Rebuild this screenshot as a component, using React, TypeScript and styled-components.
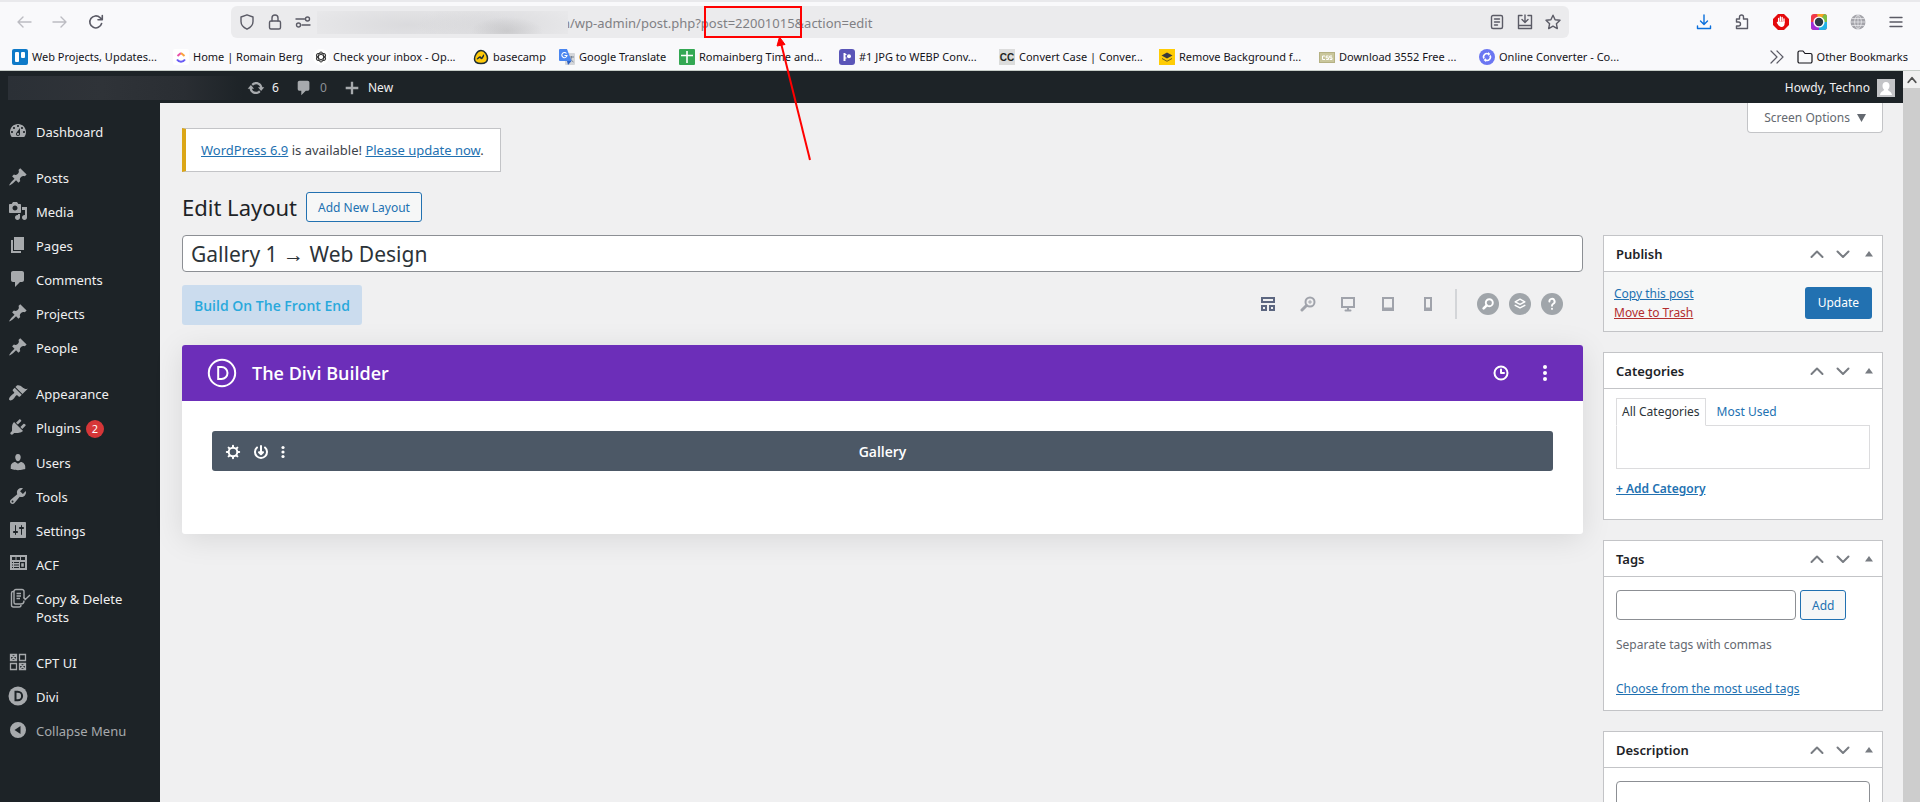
import React from "react";
import styled, { createGlobalStyle } from "styled-components";

const GlobalStyle = createGlobalStyle`
  *, *::before, *::after { box-sizing: border-box; }
  html, body { margin: 0; padding: 0; }
  body {
    font-family: "Noto Sans", "Open Sans", sans-serif;
    font-size: 12px;
    line-height: 18px;
    color: #3c434a;
    background: #f0f0f1;
    overflow: hidden;
  }
  button, input, textarea { font: inherit; color: inherit; margin: 0; }
  button { padding: 0; border: 0; background: none; cursor: pointer; }
  ul { list-style: none; margin: 0; padding: 0; }
  h1, h2, p { margin: 0; font-weight: 400; }
  a { color: #2271b1; }
  svg { display: block; flex: none; }
`;

/* ---------- shared ---------- */

const Window = styled.div`
  position: relative;
  display: flex;
  flex-direction: column;
  height: 100vh;
  overflow: hidden;
`;

const IconButton = styled.button<{ $size?: number; $color?: string }>`
  display: flex;
  align-items: center;
  justify-content: center;
  flex: none;
  width: ${(p) => p.$size ?? 28}px;
  height: ${(p) => p.$size ?? 28}px;
  color: ${(p) => p.$color ?? "#5b5b66"};
`;

const OutlineButton = styled.button`
  height: 30px;
  padding: 1px 11px 0;
  border: 1px solid #2271b1;
  border-radius: 3px;
  background: #f6f7f7;
  color: #2271b1;
`;

/* ---------- browser chrome ---------- */

const Chrome = styled.header`
  flex: none;
  background: #f9f9fb;
  border-top: 2px solid #e9e9ec;
  border-bottom: 1px solid #c6cdc8;
`;

const NavBar = styled.div`
  display: flex;
  align-items: center;
  height: 40px;
  padding: 0 10px 0 10px;
`;

const NavButtons = styled.div`
  display: flex;
  gap: 8px;
  width: 221px;
`;

const AddressBar = styled.div`
  flex: 1;
  min-width: 0;
  display: flex;
  align-items: center;
  height: 32px;
  padding: 0 2px;
  border-radius: 6px;
  background: #ebebed;
`;

/* Opaque patch that hides the host name, overlapping its last letter. */
const Redacted = styled.span`
  position: relative;
  z-index: 1;
  flex: none;
  width: 251px;
  height: 23px;
  margin-right: -6px;
  background:
    radial-gradient(ellipse 36px 14px at 190px 20px, rgba(190, 190, 192, 0.6), rgba(190, 190, 192, 0)),
    radial-gradient(ellipse 80px 24px at 180px 14px, rgba(205, 205, 208, 0.5), rgba(205, 205, 208, 0)),
    radial-gradient(ellipse 110px 24px at 90px 14px, rgba(205, 205, 208, 0.5), rgba(205, 205, 208, 0)),
    #e8e8ea;
`;

const UrlField = styled.input`
  flex: 1;
  min-width: 0;
  padding: 2px 0 0;
  border: 0;
  outline: 0;
  background: transparent;
  font-size: 13px;
  color: #808084;
`;

const Extensions = styled.div`
  display: flex;
  justify-content: space-between;
  width: 220px;
  margin-left: 121px;
`;

const Bookmarks = styled.nav`
  display: flex;
  align-items: center;
  gap: 12px;
  height: 28px;
  padding: 1px 12px 0;
`;

const Bookmark = styled.a<{ $width?: number }>`
  display: flex;
  align-items: center;
  gap: 4px;
  width: ${(p) => (p.$width ? `${p.$width}px` : "auto")};
  flex: none;
  font-size: 11px;
  white-space: nowrap;
  color: #15141a;
  text-decoration: none;
`;

const BookmarkEnd = styled.div`
  display: flex;
  align-items: center;
  gap: 12px;
  margin-left: auto;
`;

/* ---------- admin bar ---------- */

const Viewport = styled.div`
  flex: 1;
  min-height: 0;
  display: flex;
`;

const Page = styled.div`
  flex: 1;
  min-width: 0;
  display: flex;
  flex-direction: column;
`;

const AdminBar = styled.div`
  flex: none;
  display: flex;
  align-items: center;
  height: 32px;
  padding: 1px 8px 0;
  background: #1d2327;
  color: #f0f0f1;
`;

const SiteName = styled.span`
  width: 235px;
  height: 24px;
  background: linear-gradient(90deg, #2b3036, #2f3338 40%, #2a2e33 75%, #1d2327);
`;

const AdminItem = styled.a<{ $muted?: boolean; $width?: number }>`
  display: flex;
  align-items: center;
  gap: 7px;
  width: ${(p) => (p.$width ? `${p.$width}px` : "auto")};
  color: ${(p) => (p.$muted ? "#8c9196" : "#f0f0f1")};
  text-decoration: none;
  svg { color: #a7aaad; }
`;

const AdminItems = styled.div`
  display: flex;
  padding-left: 4px;
`;

const Account = styled(AdminItem)`
  margin-left: auto;
`;

const Body = styled.div`
  flex: 1;
  min-height: 0;
  display: flex;
`;

/* ---------- side menu ---------- */

const SideMenu = styled.nav`
  flex: none;
  width: 160px;
  padding-top: 12px;
  background: #1d2327;
`;

const MenuItem = styled.li<{ $spaced?: boolean }>`
  margin-top: ${(p) => (p.$spaced ? 12 : 0)}px;
`;

const MenuLink = styled.a<{ $muted?: boolean }>`
  display: flex;
  gap: 8px;
  width: 100%;
  padding: 8px 16px 8px 8px;
  font-size: 13px;
  line-height: 18px;
  text-decoration: none;
  color: ${(p) => (p.$muted ? "#a7aaad" : "#f0f0f1")};
  svg { color: #a7aaad; margin-top: -2px; }
`;

const Count = styled.span`
  display: inline-block;
  min-width: 18px;
  margin-left: 5px;
  border-radius: 9px;
  background: #d63638;
  color: #fff;
  font-size: 11px;
  text-align: center;
`;

/* ---------- main content ---------- */

const Content = styled.main`
  flex: 1;
  min-width: 0;
  padding: 0 20px 0 22px;
`;

const TopRow = styled.div`
  display: flex;
  justify-content: space-between;
  align-items: flex-start;
  margin-bottom: 20px;
`;

const Notice = styled.p`
  margin-top: 25px;
  padding: 12px 16px 12px 15px;
  border: 1px solid #c3c4c7;
  border-left: 4px solid #dba617;
  background: #fff;
  font-size: 13px;
`;

const ScreenOptions = styled.button`
  height: 30px;
  padding: 1px 16px 0;
  border: 1px solid #c3c4c7;
  border-top: 0;
  border-radius: 0 0 4px 4px;
  background: #fff;
  color: #646970;
  display: flex;
  align-items: center;
  gap: 7px;
`;

const Heading = styled.div`
  display: flex;
  align-items: center;
  gap: 9px;
  margin-bottom: 13px;
`;

const Title = styled.h1`
  font-size: 22px;
  line-height: 28px;
  color: #1d2327;
`;

const Columns = styled.div`
  display: grid;
  grid-template-columns: minmax(0, 1fr) 280px;
  gap: 20px;
  align-items: start;
`;

const TitleInput = styled.input`
  display: block;
  width: 100%;
  height: 37px;
  padding: 0 8px;
  border: 1px solid #8c8f94;
  border-radius: 4px;
  background: #fff;
  font-size: 21px;
  color: #2c3338;
`;

const BuilderBar = styled.div`
  display: flex;
  align-items: center;
  justify-content: space-between;
  margin: 13px 0 20px;
`;

const BuildButton = styled.button`
  height: 40px;
  padding: 1px 12px 0;
  border-radius: 3px;
  background: #cbdcee;
  color: #29a9dc;
  font-family: "Open Sans", "Noto Sans", sans-serif;
  font-size: 14px;
  font-weight: 600;
`;

const ViewTools = styled.div`
  display: flex;
  align-items: center;
  height: 40px;
  padding: 0 20px 2px 0;
`;

const Divider = styled.span`
  width: 2px;
  height: 30px;
  margin: 0 20px 0 7px;
  background: #d3d5d8;
`;

const RoundTools = styled.div`
  display: flex;
  gap: 10px;
`;

const RoundButton = styled(IconButton)`
  border-radius: 50%;
  background: #a0a5aa;
  color: #fff;
`;

const Builder = styled.section`
  border-radius: 3px;
  background: #fff;
  box-shadow: 0 5px 30px rgba(0, 0, 0, 0.1);
  font-family: "Open Sans", "Noto Sans", sans-serif;
`;

const BuilderHead = styled.div`
  display: flex;
  align-items: center;
  height: 56px;
  padding: 0 24px;
  border-radius: 3px 3px 0 0;
  background: #6c2eb9;
  color: #fff;
`;

const BuilderTitle = styled.h2`
  flex: 1;
  margin-left: 14px;
  font-size: 18px;
  line-height: 24px;
  font-weight: 600;
`;

const BuilderActions = styled.div`
  display: flex;
  gap: 16px;
`;

const BuilderBody = styled.div`
  padding: 30px 30px 63px;
`;

const ModuleRow = styled.div`
  display: grid;
  grid-template-columns: 1fr auto 1fr;
  align-items: center;
  height: 40px;
  padding: 1px 7px 0;
  border-radius: 3px;
  background: #4c5866;
  color: #fff;
  font-size: 14px;
  font-weight: 600;
`;

const ModuleTools = styled.div`
  display: flex;
  align-items: center;
`;

/* ---------- meta boxes ---------- */

const Sidebar = styled.aside`
  display: flex;
  flex-direction: column;
  gap: 20px;
`;

const Box = styled.section`
  border: 1px solid #c3c4c7;
  background: #fff;
`;

const BoxHead = styled.div`
  display: flex;
  align-items: center;
  height: 36px;
  padding: 0 0 0 12px;
  border-bottom: 1px solid #c3c4c7;
`;

const BoxTitle = styled.h2`
  flex: 1;
  font-size: 13px;
  font-weight: 600;
  color: #1d2327;
`;

const PublishBody = styled.div`
  display: flex;
  justify-content: space-between;
  align-items: center;
  height: 59px;
  padding: 3px 10px 0;
  background: #f6f7f7;
`;

const PublishLinks = styled.div`
  display: flex;
  flex-direction: column;
  gap: 1px;
`;

const DangerLink = styled.a`
  color: #b32d2e;
`;

const PrimaryButton = styled.button`
  height: 32px;
  padding: 0 13px;
  border-radius: 3px;
  background: #2271b1;
  color: #fff;
`;

const BoxBody = styled.div<{ $top: number; $bottom: number }>`
  padding: ${(p) => p.$top}px 12px ${(p) => p.$bottom}px;
`;

const Tabs = styled.div`
  display: flex;
`;

const Tab = styled.button<{ $active?: boolean }>`
  height: 28px;
  padding: 0 5px;
  margin-right: 5px;
  margin-bottom: -1px;
  border: 1px solid ${(p) => (p.$active ? "#dcdcde" : "transparent")};
  border-bottom-color: ${(p) => (p.$active ? "#fff" : "transparent")};
  background: ${(p) => (p.$active ? "#fff" : "transparent")};
  color: ${(p) => (p.$active ? "#2c3338" : "#2271b1")};
  z-index: 1;
`;

const TabPanel = styled.div`
  height: 44px;
  margin-bottom: 11px;
  border: 1px solid #dcdcde;
`;

const StrongLink = styled.a`
  font-weight: 600;
`;

const TagRow = styled.div`
  display: flex;
  gap: 4px;
`;

const TagInput = styled.input`
  width: 180px;
  height: 30px;
  border: 1px solid #8c8f94;
  border-radius: 4px;
  background: #fff;
`;

const Hint = styled.p`
  margin: 16px 0 26px;
  color: #646970;
`;

const Description = styled.textarea`
  display: block;
  width: 100%;
  height: 80px;
  border: 1px solid #8c8f94;
  border-radius: 4px;
  background: #fff;
  resize: none;
`;

/* ---------- scroll track and annotation ---------- */

const ScrollTrack = styled.div`
  flex: none;
  width: 17px;
  background: #cdcdcd;
`;

const ScrollUp = styled.div`
  display: flex;
  align-items: center;
  justify-content: center;
  height: 17px;
  background: #f0f0f0;
  color: #505050;
`;

const Annotation = styled.svg`
  position: absolute;
  left: 703px;
  top: 5px;
  pointer-events: none;
`;

/* ---------- icons ---------- */

const Dash = ({ d, size = 20 }: { d: string; size?: number }) => (
  <svg width={size} height={size} viewBox="0 0 20 20" fill="currentColor" fillRule="evenodd" aria-hidden>
    <path d={d} />
  </svg>
);

const Line = ({
  children,
  size = 16,
  w = 1.4,
}: {
  children: React.ReactNode;
  size?: number;
  w?: number;
}) => (
  <svg
    width={size}
    height={size}
    viewBox="0 0 16 16"
    fill="none"
    stroke="currentColor"
    strokeWidth={w}
    strokeLinecap="round"
    strokeLinejoin="round"
    aria-hidden
  >
    {children}
  </svg>
);

const PIN =
  "M10.44 3.02l1.82-1.82 6.36 6.35-1.83 1.82c-1.05-.68-2.48-.57-3.41.36l-.75.75c-.92.93-1.04 2.35-.35 3.41l-1.83 1.82-2.41-2.41-2.8 2.79c-.42.42-3.38 2.71-3.8 2.29s1.86-3.39 2.28-3.81l2.79-2.79L4.1 9.36l1.83-1.82c1.05.69 2.48.57 3.4-.36l.75-.75c.93-.92 1.05-2.35.36-3.41z";
const COMMENT =
  "M5 2h9c1.1 0 2 .9 2 2v7c0 1.1-.9 2-2 2h-2l-5 5v-5H5c-1.1 0-2-.9-2-2V4c0-1.1.9-2 2-2z";
const UPDATE =
  "M10.2 3.28c3.53 0 6.43 2.61 6.92 6h2.08l-3.5 4-3.5-4h2.32c-.45-1.97-2.21-3.45-4.32-3.45-1.45 0-2.73.71-3.54 1.78L4.95 5.66C6.23 4.2 8.11 3.28 10.2 3.28zm-.4 13.44c-3.52 0-6.43-2.61-6.92-6H.8l3.5-4c1.17 1.33 2.33 2.67 3.5 4H5.48c.45 1.97 2.21 3.45 4.32 3.45 1.45 0 2.73-.71 3.54-1.78l1.71 1.95c-1.28 1.46-3.15 2.38-5.25 2.38z";
const DASHBOARD =
  "M3.76 16h12.48c1.1-1.37 1.76-3.11 1.76-5 0-4.42-3.58-8-8-8s-8 3.58-8 8c0 1.89.66 3.63 1.76 5zM10 4c.55 0 1 .45 1 1s-.45 1-1 1-1-.45-1-1 .45-1 1-1zM6 6c.55 0 1 .45 1 1s-.45 1-1 1-1-.45-1-1 .45-1 1-1zm8 0c.55 0 1 .45 1 1s-.45 1-1 1-1-.45-1-1 .45-1 1-1zm-5.37 5.55L12 7v6c0 1.1-.9 2-2 2s-2-.9-2-2c0-.57.24-1.08.63-1.45zM4 10c.55 0 1 .45 1 1s-.45 1-1 1-1-.45-1-1 .45-1 1-1zm12 0c.55 0 1 .45 1 1s-.45 1-1 1-1-.45-1-1 .45-1 1-1zm-5 3c0-.55-.45-1-1-1s-1 .45-1 1 .45 1 1 1 1-.45 1-1z";
const MEDIA =
  "M13 11V4c0-.55-.45-1-1-1h-1.67L9 1H5L3.67 3H2c-.55 0-1 .45-1 1v7c0 .55.45 1 1 1h10c.55 0 1-.45 1-1zM7 4.5c1.38 0 2.5 1.12 2.5 2.5S8.38 9.5 7 9.5 4.5 8.38 4.5 7 5.62 4.5 7 4.5zM14 6h5v10.5c0 1.38-1.12 2.5-2.5 2.5S14 17.88 14 16.5s1.12-2.5 2.5-2.5c.17 0 .34.02.5.05V9h-3V6zm-4 8.05V13h2v3.5c0 1.38-1.12 2.5-2.5 2.5S7 17.88 7 16.5 8.12 14 9.5 14c.17 0 .34.02.5.05z";
const PAGES = "M6 15V2h10v13H6zm-1 1h8v2H3V5h2v11z";
const APPEARANCE =
  "M14.48 11.06L7.41 3.99l1.5-1.5c.5-.56 2.3-.47 3.51.32 1.21.8 1.43 1.28 2.91 2.1 1.18.64 2.45 1.26 4.45.85zm-.71.71L6.7 4.7 4.93 6.47c-.39.39-.39 1.02 0 1.41l1.06 1.06c.39.39.39 1.03 0 1.42-.6.6-1.43 1.11-2.21 1.69-.35.26-.7.53-1.01.84C1.43 14.23.4 16.08 1.4 17.07c.99 1 2.84-.03 4.18-1.36.31-.31.58-.66.85-1.02.57-.78 1.08-1.61 1.69-2.21.39-.39 1.02-.39 1.41 0l1.06 1.06c.39.39 1.02.39 1.41 0z";
const PLUGINS =
  "M13.11 4.36L9.87 7.6 8 5.73l3.24-3.24c.35-.34 1.05-.2 1.56.32.52.51.66 1.21.31 1.55zm-8 1.77l.91-1.12 9.01 9.01-1.19.84c-.71.71-2.63 1.16-3.82 1.16H6.14L4.9 17.26c-.59.59-1.54.59-2.12 0-.59-.58-.59-1.53 0-2.12l1.24-1.24v-3.88c0-1.13.4-3.19 1.09-3.89zm7.26 3.97l3.24-3.24c.34-.35 1.04-.21 1.55.31.52.51.66 1.21.31 1.55l-3.24 3.25z";
const USERS =
  "M10 9.25c-2.27 0-2.73-3.44-2.73-3.44C7 4.02 7.82 2 9.97 2c2.16 0 2.98 2.02 2.71 3.81 0 0-.41 3.44-2.68 3.44zm0 2.57L12.72 10c2.39 0 4.52 2.33 4.52 4.53v2.49s-3.65 1.13-7.24 1.13c-3.65 0-7.24-1.13-7.24-1.13v-2.49c0-2.25 1.94-4.48 4.47-4.48z";
const TOOLS =
  "M16.68 9.77c-1.34 1.34-3.3 1.67-4.95.99l-5.41 6.52c-.99.99-2.59.99-3.58 0s-.99-2.59 0-3.57l6.52-5.42c-.68-1.65-.35-3.61.99-4.95 1.28-1.28 3.12-1.62 4.72-1.06l-2.89 2.89 2.82 2.82 2.86-2.87c.53 1.58.18 3.39-1.08 4.65zM3.81 16.21c.4.39 1.04.39 1.43 0 .4-.4.4-1.04 0-1.43-.39-.4-1.03-.4-1.43 0-.39.39-.39 1.03 0 1.43z";
const SETTINGS =
  "M18 17V3c0-.55-.45-1-1-1H3c-.55 0-1 .45-1 1v14c0 .55.45 1 1 1h14c.55 0 1-.45 1-1zM8 11h1c.55 0 1 .45 1 1s-.45 1-1 1H8v1.5c0 .28-.22.5-.5.5s-.5-.22-.5-.5V13H6c-.55 0-1-.45-1-1s.45-1 1-1h1V5.5c0-.28.22-.5.5-.5s.5.22.5.5V11zm5-2h-1c-.55 0-1-.45-1-1s.45-1 1-1h1V5.5c0-.28.22-.5.5-.5s.5.22.5.5V7h1c.55 0 1 .45 1 1s-.45 1-1 1h-1v5.5c0 .28-.22.5-.5.5s-.5-.22-.5-.5V9z";
const ACF =
  "M2 1h17v15H2zM4 3v3h3.500V3zM8.500 3v3H12V3zM13 3v3h4V3zM4 8v1h1V8zm2 0v1h5V8zM4 10.500v1h1v-1zm2 0v1h5v-1zM4 13v1h1v-1zm2 0v1h5v-1zM12 8v6h5V8zm1.200 1.200h2.600v3.600h-2.600z";
const COLLAPSE = "M10 2a8 8 0 1 1 0 16 8 8 0 0 1 0-16zM12.500 6v8L6.500 10z";

const CopyIcon = () => (
  <svg width="20" height="20" viewBox="0 0 20 20" fill="none" stroke="currentColor" strokeWidth="1.400" overflow="visible" aria-hidden>
    <path d="M16 10V3.500a2 2 0 0 0-2-2H8a2 2 0 0 0-2 2v11a1.500 1.500 0 0 0 1.500 1.500H13a3 3 0 0 0 3-3v-.5" />
    <path d="M6 3.500H5a1.500 1.500 0 0 0-1.500 1.500v12A2 2 0 0 0 5.500 19H11a2 2 0 0 0 2-2M8.500 5.500H13M8.500 8H13M8.500 10.500H12M15.500 9.500l1.800 2L22 7" />
  </svg>
);

const CptIcon = () => (
  <svg width="20" height="20" viewBox="0 0 20 20" fill="none" stroke="currentColor" strokeWidth="1.300" aria-hidden>
    <path d="M2.500 2.500h6v6h-6zM11.500 2.500h6v6h-6zM2.500 11.500h6v6h-6zM11.500 11.500h6v6h-6zM3 3l5 5M8 3L3 8M12 12l5 5M17 12l-5 5" />
  </svg>
);

const DiviIcon = () => (
  <svg width="20" height="20" viewBox="0 0 20 20" aria-hidden>
    <circle cx="10" cy="10" r="9.500" fill="currentColor" />
    <path d="M7.500 5.700h2.300a4.300 4.300 0 0 1 0 8.600H7.500z" fill="none" stroke="#1d2327" strokeWidth="2" />
  </svg>
);

const DiviMark = () => (
  <svg width="32" height="32" viewBox="0 0 32 32" fill="none" stroke="#fff" strokeWidth="2" aria-hidden>
    <circle cx="16" cy="16" r="13.200" />
    <path d="M12.200 10h3.300a6 6 0 0 1 0 12h-3.300z" />
  </svg>
);

const Dots = ({ r, gap }: { r: number; gap: number }) => (
  <svg width="6" height="20" viewBox="0 0 6 20" fill="currentColor" aria-hidden>
    <circle cx="3" cy={10 - gap} r={r} />
    <circle cx="3" cy="10" r={r} />
    <circle cx="3" cy={10 + gap} r={r} />
  </svg>
);

const Favicon = ({ name }: { name: string }) => (
  <svg width="16" height="16" viewBox="0 0 16 16" aria-hidden>
    {name === "trello" && (
      <>
        <rect width="16" height="16" rx="2" fill="#0f7ac8" />
        <rect x="3" y="3" width="4" height="10" rx="1" fill="#fff" />
        <rect x="9" y="3" width="4" height="6" rx="1" fill="#fff" />
      </>
    )}
    {name === "clickup" && (
      <>
        <rect width="16" height="16" rx="2" fill="#fff" />
        <path d="M4.500 7L8 4" fill="none" stroke="#e84fa8" strokeWidth="2" />
        <path d="M8 4l3.500 3" fill="none" stroke="#fba23c" strokeWidth="2" />
        <path d="M4 10.500c2 3 6 3 8 0" fill="none" stroke="#6a5cf5" strokeWidth="2" />
      </>
    )}
    {name === "openai" && (
      <>
        <circle cx="8" cy="8" r="8" fill="#fff" />
        <g fill="none" stroke="#333" strokeWidth="1">
          <ellipse cx="8" cy="8" rx="2.500" ry="5" />
          <ellipse cx="8" cy="8" rx="2.500" ry="5" transform="rotate(60 8 8)" />
          <ellipse cx="8" cy="8" rx="2.500" ry="5" transform="rotate(120 8 8)" />
        </g>
      </>
    )}
    {name === "basecamp" && (
      <>
        <path
          d="M8 1.500c4 0 6.500 4.500 6.500 8 0 3.500-3 5-6.500 5s-6.500-1.500-6.500-4.500S4 1.500 8 1.500z"
          fill="#ffca0a"
          stroke="#1d2d35"
          strokeWidth="1.500"
        />
        <path d="M4 9.500c1 .8 2-1.500 3-1.500s.6 1.500 1.500 1.500S10.500 6 11 6" fill="none" stroke="#1d2d35" strokeWidth="1.500" />
      </>
    )}
    {name === "translate" && (
      <>
        <rect x="6" y="4" width="10" height="12" rx="1" fill="#d4d6da" />
        <path d="M10 8h5M12.500 7v1c0 2-1.500 4-3 5M11 9.500c.8 1.500 2 2.500 3.500 3.500" stroke="#7a8594" fill="none" />
        <path d="M1 0h7l4.500 12H1a1 1 0 0 1-1-1V1a1 1 0 0 1 1-1z" fill="#4a86f0" />
        <path d="M12.500 12L9 16l-1-4z" fill="#2a5fc4" />
        <path d="M7.500 4.500A2.600 2.600 0 1 0 8 6.500H5.500" fill="none" stroke="#fff" strokeWidth="1.100" />
      </>
    )}
    {name === "sheets" && (
      <>
        <rect width="16" height="16" rx="1" fill="#34a853" />
        <path d="M2 6.500h12M8 2v12" stroke="#fff" strokeWidth="1.600" />
      </>
    )}
    {name === "webp" && (
      <>
        <rect width="16" height="16" rx="3" fill="#5a55b8" />
        <path d="M5.500 4v8" stroke="#fff" strokeWidth="2" />
        <path d="M6 5.500h1.500M6 9h1.500" stroke="#fff" strokeWidth="1" />
        <circle cx="10" cy="7.200" r="2" fill="#fff" />
      </>
    )}
    {name === "case" && (
      <>
        <rect width="16" height="16" fill="#dcdcdc" />
        <text x="8" y="12" textAnchor="middle" fontFamily="Liberation Sans, sans-serif" fontSize="10" fontWeight="700" fill="#222">
          CC
        </text>
      </>
    )}
    {name === "remove" && (
      <>
        <rect width="16" height="16" fill="#ffcc05" />
        <path d="M8 3.500l5.500 3L8 9.500l-5.500-3z" fill="#3b3b3b" />
        <path d="M3 9l5 2.800L13 9v1L8 12.800 3 10z" fill="#6b5b20" />
      </>
    )}
    {name === "download" && (
      <>
        <rect y="3" width="16" height="11" fill="#b5b183" />
        <rect x="1" y="4" width="14" height="9" fill="#c9c69c" />
        <path d="M6 7H3.500v3.500H6M9.500 7H7.200v1.800h2.300v1.700H7.200M13 7h-2.300v1.800H13v1.700h-2.300" fill="none" stroke="#fff" />
      </>
    )}
    {name === "convert" && (
      <>
        <circle cx="8" cy="8" r="8" fill="#6b76f2" />
        <path d="M5 9.500A3.300 3.300 0 0 1 9.500 5M11 6.500A3.300 3.300 0 0 1 6.500 11" fill="none" stroke="#fff" strokeWidth="1.600" />
        <path d="M9 3l2.500 2L9 6.700zM7 13l-2.500-2L7 9.300z" fill="#fff" />
      </>
    )}
  </svg>
);

/* ---------- data ---------- */

const bookmarks: { icon: string; label: string; width: number }[] = [
  { icon: "trello", label: "Web Projects, Updates...", width: 149 },
  { icon: "clickup", label: "Home | Romain Berg", width: 128 },
  { icon: "openai", label: "Check your inbox - Op...", width: 148 },
  { icon: "basecamp", label: "basecamp", width: 74 },
  { icon: "translate", label: "Google Translate", width: 108 },
  { icon: "sheets", label: "Romainberg Time and...", width: 148 },
  { icon: "webp", label: "#1 JPG to WEBP Conv...", width: 148 },
  { icon: "case", label: "Convert Case | Conver...", width: 148 },
  { icon: "remove", label: "Remove Background f...", width: 148 },
  { icon: "download", label: "Download 3552 Free ...", width: 148 },
  { icon: "convert", label: "Online Converter - Co...", width: 148 },
];

const menu: { label: string; icon: React.ReactNode; spaced?: boolean; count?: number }[] = [
  { label: "Dashboard", icon: <Dash d={DASHBOARD} /> },
  { label: "Posts", icon: <Dash d={PIN} />, spaced: true },
  { label: "Media", icon: <Dash d={MEDIA} /> },
  { label: "Pages", icon: <Dash d={PAGES} /> },
  { label: "Comments", icon: <Dash d={COMMENT} /> },
  { label: "Projects", icon: <Dash d={PIN} /> },
  { label: "People", icon: <Dash d={PIN} /> },
  { label: "Appearance", icon: <Dash d={APPEARANCE} />, spaced: true },
  { label: "Plugins", icon: <Dash d={PLUGINS} />, count: 2 },
  { label: "Users", icon: <Dash d={USERS} /> },
  { label: "Tools", icon: <Dash d={TOOLS} /> },
  { label: "Settings", icon: <Dash d={SETTINGS} /> },
  { label: "ACF", icon: <Dash d={ACF} /> },
  { label: "Copy & Delete Posts", icon: <CopyIcon /> },
  { label: "CPT UI", icon: <CptIcon />, spaced: true },
  { label: "Divi", icon: <DiviIcon /> },
];

/* ---------- parts ---------- */

const MetaBox = ({ title, children }: { title: string; children: React.ReactNode }) => (
  <Box>
    <BoxHead>
      <BoxTitle>{title}</BoxTitle>
      <IconButton $size={26} $color="#787c82" aria-label={`Move ${title} up`}>
        <Line size={16} w={2}><path d="M2.500 11L8 5.500 13.500 11" /></Line>
      </IconButton>
      <IconButton $size={26} $color="#787c82" aria-label={`Move ${title} down`}>
        <Line size={16} w={2}><path d="M2.500 5.500L8 11l5.500-5.500" /></Line>
      </IconButton>
      <IconButton $size={26} $color="#787c82" aria-label={`Toggle ${title}`}>
        <svg width="8" height="8" viewBox="0 0 8 8" fill="currentColor" aria-hidden><path d="M0 6.500h8L4 1z" /></svg>
      </IconButton>
    </BoxHead>
    {children}
  </Box>
);

const BrowserChrome = () => (
  <Chrome>
    <NavBar>
      <NavButtons>
        <IconButton $color="#bcbcc2" aria-label="Back"><Line><path d="M15 8H2M7 3L2 8l5 5" /></Line></IconButton>
        <IconButton $color="#bcbcc2" aria-label="Forward"><Line><path d="M1 8h13M9 3l5 5-5 5" /></Line></IconButton>
        <IconButton aria-label="Reload">
          <Line w={1.6}><path d="M13.600 9.500A6 6 0 1 1 12 3.600l2 2M14.300 1.500v4.300H10" /></Line>
        </IconButton>
      </NavButtons>
      <AddressBar>
        <IconButton aria-label="Tracking protection">
          <Line><path d="M8 .8l6 2.200v4.500c0 3.500-2.500 6-6 7.700-3.500-1.700-6-4.200-6-7.700V3z" /></Line>
        </IconButton>
        <IconButton aria-label="Site information">
          <Line><rect x="2.500" y="7" width="11" height="8" rx="1.500" /><path d="M5 7V4a3 3 0 0 1 6 0v3" /></Line>
        </IconButton>
        <IconButton aria-label="Permissions">
          <Line><path d="M1 5h8.500M7 11h8" /><circle cx="12.500" cy="5" r="2" /><circle cx="3.500" cy="11" r="2" /></Line>
        </IconButton>
        <Redacted />
        <UrlField aria-label="Address" defaultValue="n/wp-admin/post.php?post=22001015&action=edit" />
        <IconButton aria-label="Reader view">
          <Line><rect x="2.500" y="1.500" width="11" height="13" rx="1.500" /><path d="M5.500 5h5M5.500 8h5M5.500 11h3" /></Line>
        </IconButton>
        <IconButton aria-label="Save page">
          <Line><path d="M5 1.500H1.500v10.500M11 1.500h3.500V12M1.500 11.500h13v3h-13zM8 1v7M5 5.500l3 3 3-3" /></Line>
        </IconButton>
        <IconButton aria-label="Bookmark page">
          <Line><path d="M8 1.200l2.100 4.500 4.900.6-3.600 3.400.9 4.900L8 12.200l-4.300 2.400.9-4.900L1 6.300l4.900-.6z" /></Line>
        </IconButton>
      </AddressBar>
      <Extensions>
        <IconButton $color="#0a6fdc" aria-label="Downloads">
          <Line><path d="M8 1v9M4.500 7L8 10.500 11.500 7M1.500 12v2.500h13V12" /></Line>
        </IconButton>
        <IconButton aria-label="Extensions">
          <Line><path d="M2.500 5h3V3a2 2 0 0 1 4 0v2h4v9.500h-11V12h2a2 2 0 0 0 0-4h-2z" /></Line>
        </IconButton>
        <IconButton aria-label="Ad blocker">
          <svg width="16" height="16" viewBox="0 0 16 16" aria-hidden>
            <path d="M5 0h6l5 5v6l-5 5H5l-5-5V5z" fill="#e4090c" />
            <path d="M5.600 8V4.500M7.400 7V3M9.200 7V3.500M11 8.500V5" stroke="#fff" strokeWidth="1.300" strokeLinecap="round" />
            <path d="M5 7.500h6.600v2c0 2-1.200 3.500-3 3.500-2.200 0-3-1.500-5-4.500z" fill="#fff" />
          </svg>
        </IconButton>
        <IconButton aria-label="Color picker">
          <svg width="16" height="16" viewBox="0 0 16 16" aria-hidden>
            <rect width="16" height="16" rx="3" fill="#f03a4a" />
            <path d="M8 8H0v5a3 3 0 0 0 3 3h5z" fill="#a12fd6" />
            <path d="M8 8v8h5a3 3 0 0 0 3-3V8z" fill="#23b3e8" />
            <path d="M8 8l5-8a3 3 0 0 1 3 3v5z" fill="#7bc043" />
            <path d="M8 8L6 0h7z" fill="#f5a623" />
            <circle cx="8" cy="8" r="5.600" fill="#fff" />
            <circle cx="8" cy="8" r="4.200" fill="#2d3a45" />
          </svg>
        </IconButton>
        <IconButton $color="#a4a4aa" aria-label="Proxy">
          <svg width="16" height="16" viewBox="0 0 16 16" aria-hidden>
            <circle cx="8" cy="8" r="7.500" fill="currentColor" />
            <path d="M8 0v16M0 8h16M1.500 4.500h13M1.500 11.500h13M8 .5c-4.500 4-4.500 11 0 15M8 .5c4.500 4 4.500 11 0 15" stroke="#f1f1f3" strokeWidth=".7" fill="none" />
          </svg>
        </IconButton>
        <IconButton aria-label="Menu"><Line><path d="M2 3.500h12M2 8h12M2 12.500h12" /></Line></IconButton>
      </Extensions>
    </NavBar>
    <Bookmarks aria-label="Bookmarks">
      {bookmarks.map((b) => (
        <Bookmark key={b.label} href="#" $width={b.width}>
          <Favicon name={b.icon} />
          {b.label}
        </Bookmark>
      ))}
      <BookmarkEnd>
        <IconButton $size={16} aria-label="More bookmarks"><Line w={1.2}><path d="M2 2l6 6-6 6M8 2l6 6-6 6" /></Line></IconButton>
        <Bookmark href="#">
          <Line w={1.2}><path d="M1 13V3.500A1.500 1.500 0 0 1 2.500 2H6l2 2.500h5.500A1.500 1.500 0 0 1 15 6v6.500a1.500 1.500 0 0 1-1.500 1.500h-11A1.500 1.500 0 0 1 1 12.500z" /></Line>
          Other Bookmarks
        </Bookmark>
      </BookmarkEnd>
    </Bookmarks>
  </Chrome>
);

const EditorColumn = () => (
  <div>
    <TitleInput aria-label="Title" defaultValue="Gallery 1 → Web Design" />
    <BuilderBar>
      <BuildButton>Build On The Front End</BuildButton>
      <ViewTools>
        <IconButton $size={40} $color="#5c6680" aria-label="Wireframe view">
          <svg width="14" height="14" viewBox="0 0 14 14" fill="none" stroke="currentColor" strokeWidth="2" aria-hidden>
            <path d="M1 1h12v4H1zM1 9h4v4H1zM9 9h4v4H9z" />
          </svg>
        </IconButton>
        <IconButton $size={40} $color="#a0a3ab" aria-label="Zoom view">
          <Line w={2}><circle cx="10" cy="6" r="4.500" /><path d="M6.500 9.500L2 14" strokeWidth="3" /><path d="M8.500 6h3M10 4.500v3" strokeWidth="1" /></Line>
        </IconButton>
        <IconButton $size={40} $color="#a0a3ab" aria-label="Desktop view">
          <Line w={2}><path d="M2 2h12v9H2z" strokeLinejoin="miter" /><path d="M8 11v3M5.500 14.500h5" /></Line>
        </IconButton>
        <IconButton $size={40} $color="#a0a3ab" aria-label="Tablet view">
          <Line w={2}><path d="M3 2h10v12H3zM3 12.500h10" strokeLinejoin="miter" /></Line>
        </IconButton>
        <IconButton $size={40} $color="#a0a3ab" aria-label="Phone view">
          <Line w={2}><path d="M5 2h6v12H5zM5 12.500h6" strokeLinejoin="miter" /></Line>
        </IconButton>
        <Divider />
        <RoundTools>
          <RoundButton $size={22} $color="#fff" aria-label="Search">
            <Line size={14} w={2.2}><circle cx="9.500" cy="6.500" r="4" /><path d="M6.500 9.500L3 13" strokeWidth="3" /></Line>
          </RoundButton>
          <RoundButton $size={22} $color="#fff" aria-label="Layers">
            <Line size={14} w={1.6}><path d="M8 2.500l5.500 3L8 8.500l-5.500-3zM2.500 9.500L8 12.500l5.500-3" /></Line>
          </RoundButton>
          <RoundButton $size={22} $color="#fff" aria-label="Help">
            <Line size={14} w={2.2}><path d="M5 5.200a3 3 0 1 1 4.500 2.500C8.300 8.400 8 8.900 8 10M8 13.500v.1" /></Line>
          </RoundButton>
        </RoundTools>
      </ViewTools>
    </BuilderBar>
    <Builder>
      <BuilderHead>
        <DiviMark />
        <BuilderTitle>The Divi Builder</BuilderTitle>
        <BuilderActions>
          <IconButton $color="#fff" aria-label="History">
            <Line w={2}><circle cx="8" cy="8" r="6.500" /><path d="M8 4.500V8h3" /></Line>
          </IconButton>
          <IconButton $color="#fff" aria-label="Builder options"><Dots r={2} gap={6} /></IconButton>
        </BuilderActions>
      </BuilderHead>
      <BuilderBody>
        <ModuleRow>
          <ModuleTools>
            <IconButton $color="#fff" aria-label="Module settings">
              <Line w={2}>
                <circle cx="8" cy="8" r="4.300" />
                <path d="M8 1.800v1M8 13.200v1M1.800 8h1M13.200 8h1M3.600 3.600l.7.7M11.700 11.700l.7.7M3.600 12.400l.7-.7M11.700 4.300l.7-.7" />
              </Line>
            </IconButton>
            <IconButton $color="#fff" aria-label="Save module">
              <Line w={2}><path d="M4 3.500a6 6 0 1 0 8 0M8 2v8M6 8.300l2 2 2-2z" /></Line>
            </IconButton>
            <IconButton $size={16} $color="#fff" aria-label="Module options"><Dots r={1.6} gap={4.5} /></IconButton>
          </ModuleTools>
          <span>Gallery</span>
        </ModuleRow>
      </BuilderBody>
    </Builder>
  </div>
);

const MetaColumn = () => (
  <Sidebar>
    <MetaBox title="Publish">
      <PublishBody>
        <PublishLinks>
          <a href="#">Copy this post</a>
          <DangerLink href="#">Move to Trash</DangerLink>
        </PublishLinks>
        <PrimaryButton>Update</PrimaryButton>
      </PublishBody>
    </MetaBox>
    <MetaBox title="Categories">
      <BoxBody $top={9} $bottom={21}>
        <Tabs>
          <Tab $active>All Categories</Tab>
          <Tab>Most Used</Tab>
        </Tabs>
        <TabPanel />
        <StrongLink href="#">+ Add Category</StrongLink>
      </BoxBody>
    </MetaBox>
    <MetaBox title="Tags">
      <BoxBody $top={13} $bottom={12}>
        <TagRow>
          <TagInput aria-label="Add tag" />
          <OutlineButton>Add</OutlineButton>
        </TagRow>
        <Hint>Separate tags with commas</Hint>
        <a href="#">Choose from the most used tags</a>
      </BoxBody>
    </MetaBox>
    <MetaBox title="Description">
      <BoxBody $top={13} $bottom={12}>
        <Description aria-label="Description" />
      </BoxBody>
    </MetaBox>
  </Sidebar>
);

export default function App() {
  return (
    <Window>
      <GlobalStyle />
      <BrowserChrome />
      <Viewport>
        <Page>
          <AdminBar>
            <SiteName />
            <AdminItems>
              <AdminItem href="#" $width={48}>
                <Dash d={UPDATE} size={18} />6
              </AdminItem>
              <AdminItem href="#" $muted $width={48}>
                <Dash d={COMMENT} size={18} />0
              </AdminItem>
              <AdminItem href="#">
                <Dash d="M17 8.700v2.600h-5.700V17H8.700v-5.700H3V8.700h5.700V3h2.600v5.700z" size={18} />
                New
              </AdminItem>
            </AdminItems>
            <Account href="#">
              Howdy, Techno
              <svg width="18" height="18" viewBox="0 0 18 18" aria-hidden>
                <rect width="18" height="18" fill="#c3c4c7" />
                <path d="M9 3c2.200 0 3.500 1.600 3.500 3.800 0 1.800-.8 3.200-1.700 4 .3 1.400 3.700 1.400 4.200 5.200H3c.5-3.800 3.900-3.800 4.200-5.200-.9-.8-1.700-2.200-1.700-4C5.500 4.600 6.800 3 9 3z" fill="#fff" />
              </svg>
            </Account>
          </AdminBar>
          <Body>
            <SideMenu aria-label="Admin menu">
              <ul>
                {menu.map((m) => (
                  <MenuItem key={m.label} $spaced={m.spaced}>
                    <MenuLink href="#">
                      {m.icon}
                      <span>
                        {m.label}
                        {m.count && <Count>{m.count}</Count>}
                      </span>
                    </MenuLink>
                  </MenuItem>
                ))}
                <MenuItem>
                  <MenuLink as="button" $muted>
                    <Dash d={COLLAPSE} />
                    <span>Collapse Menu</span>
                  </MenuLink>
                </MenuItem>
              </ul>
            </SideMenu>
            <Content>
              <TopRow>
                <Notice>
                  <a href="#">WordPress 6.9</a> is available! <a href="#">Please update now</a>.
                </Notice>
                <ScreenOptions>
                  Screen Options
                  <svg width="9" height="8" viewBox="0 0 9 8" fill="currentColor" aria-hidden><path d="M0 0h9L4.500 8z" /></svg>
                </ScreenOptions>
              </TopRow>
              <Heading>
                <Title>Edit Layout</Title>
                <OutlineButton>Add New Layout</OutlineButton>
              </Heading>
              <Columns>
                <EditorColumn />
                <MetaColumn />
              </Columns>
            </Content>
          </Body>
        </Page>
        <ScrollTrack>
          <ScrollUp>
            <Line size={12} w={2.4}><path d="M3 11l5-6 5 6" /></Line>
          </ScrollUp>
        </ScrollTrack>
      </Viewport>
      <Annotation width="110" height="158" viewBox="0 0 110 158" fill="none" stroke="#f00" strokeWidth="2" aria-hidden>
        <rect x="2" y="2" width="96" height="30" />
        <path d="M107 155L78 38" />
        <path d="M76.500 32l5.500 7.500-8 1.500z" fill="#f00" strokeWidth="1" />
      </Annotation>
    </Window>
  );
}
